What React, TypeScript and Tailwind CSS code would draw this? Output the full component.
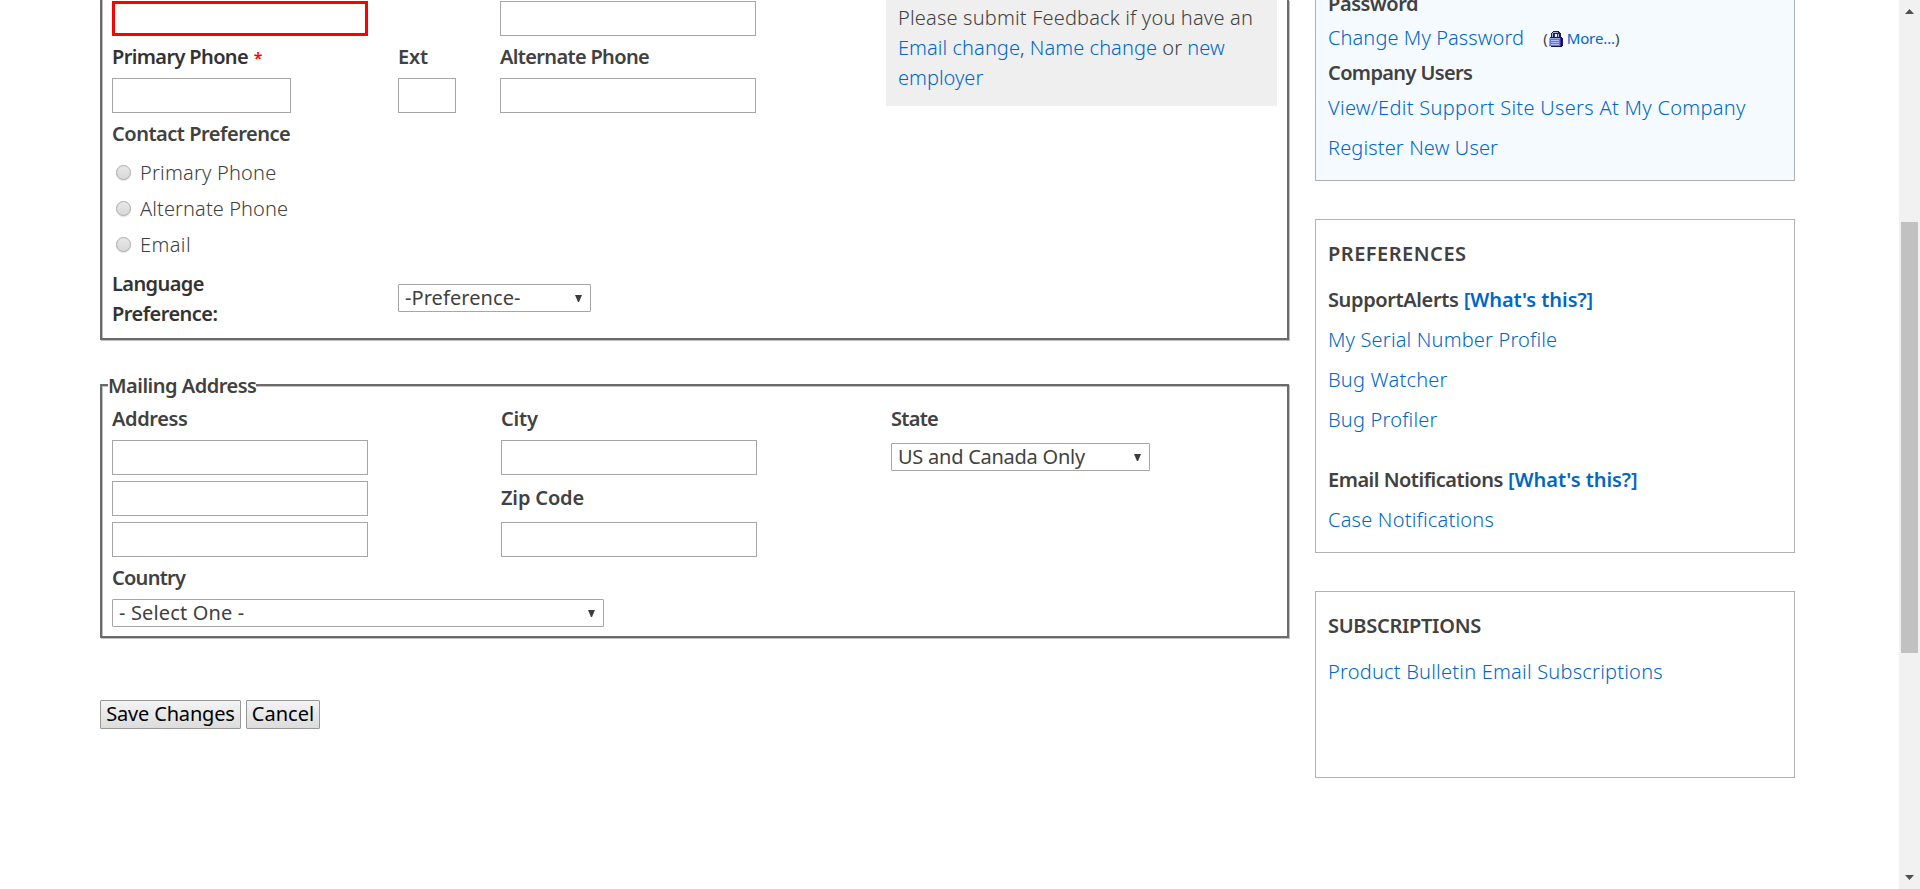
import type { ReactNode } from 'react';

const LINE = 'block h-[30px] whitespace-nowrap leading-[32px]';

function Label({ children, className = '' }: { children: ReactNode; className?: string }) {
  return <label className={`${LINE} font-semibold ${className}`}>{children}</label>;
}

function TextField({ className = 'w-64' }: { className?: string }) {
  return <input type="text" className={`block h-[35px] border border-[#a6a6a6] bg-white ${className}`} />;
}

function Select({ children, className = '' }: { children: ReactNode; className?: string }) {
  return (
    <div className={`flex h-7 items-center justify-between rounded-[1px] border border-[#a6a6a6] bg-white pr-2 pl-1.5 font-normal text-[#414141] ${className}`}>
      <span className="whitespace-nowrap leading-[26px]">{children}</span>
      <svg className="h-[7px] w-[7px]" viewBox="0 0 7 7" fill="#3c3c3c">
        <path d="M0 0h7L4 7H3z" />
      </svg>
    </div>
  );
}

function Radio({ children, className = '' }: { children: ReactNode; className?: string }) {
  return (
    <div className="flex h-9 items-center pl-1">
      <span className="h-[15px] w-[15px] rounded-full border border-[#a9a9a9] bg-linear-to-b from-[#e8e8e8] to-[#d8d8d8] shadow-[0_1px_1px_rgba(0,0,0,0.12)]" />
      <span className={`h-[30px] whitespace-nowrap pl-[9px] leading-[32px] ${className}`}>{children}</span>
    </div>
  );
}

function Link({ children, className = '' }: { children: ReactNode; className?: string }) {
  return <a href="#" className={`text-[#0067c5] ${className}`}>{children}</a>;
}

function Button({ children, className = '' }: { children: ReactNode; className?: string }) {
  return (
    <button className={`h-[29px] whitespace-nowrap rounded-[1px] border border-[#979797] bg-linear-to-b from-[#f4f4f4] to-[#dcdcdc] pb-0.5 text-center font-normal leading-[25px] text-black ${className}`}>
      {children}
    </button>
  );
}

function LockIcon() {
  return (
    <svg className="h-4 w-[15px]" viewBox="0 0 15 16" shapeRendering="crispEdges">
      <path d="M5 0h6v1h1v1h1v5h-3V3H6v4H3V2h1V1h1z" fill="#20203c" />
      <path d="M5 1h5v1H5zM4 2h1v5H4zM10 3h1v4h-1z" fill="#a9b0d8" />
      <path d="M6 3h4v4H6z" fill="#34344e" />
      <path d="M7 3h2v3H7z" fill="#e8ecfa" />
      <path d="M2 6h12v1h1v8h-1v1H3v-1H1V7h1z" fill="#1d1260" />
      <path d="M1 7h11v8H1z" fill="#6a70d8" />
      <path d="M1 7h11v1H1zM1 7h1v7H1z" fill="#9aa4ee" />
      <path d="M3 9h8v1H3zM3 11h8v1H3zM3 13h8v1H3z" fill="#b4c0fa" />
      <path d="M12 7h1v8h-1z" fill="#3b2f9c" />
    </svg>
  );
}

function ContactSection() {
  return (
    <section className="flex h-[340px] w-[1189px] justify-between border-2 border-t-0 border-[#6b6b6b] px-[10px] shadow-[inset_1px_0_0_#c0c0c0,1px_1px_0_#c0c0c0]">
      <div>
        <div className="flex pt-px">
          <input type="text" className="block h-[35px] w-64 border-3 border-[#ff0000] bg-white" />
          <TextField className="ml-[132px] w-64" />
        </div>
        <div className="mt-[5px] flex">
          <div className="w-[286px]">
            <Label className="text-[#333] tracking-[-0.63px]">
              Primary Phone <span className="ml-px text-[16px] text-[#ff0000]">*</span>
            </Label>
            <TextField className="mt-[7px] w-[179px]" />
          </div>
          <div className="w-[102px]">
            <Label className="tracking-[-0.18px]">Ext</Label>
            <TextField className="mt-[7px] w-[58px]" />
          </div>
          <div>
            <Label className="tracking-[-0.66px]">Alternate Phone</Label>
            <TextField className="mt-[7px] w-64" />
          </div>
        </div>
        <Label className="mt-[5px] tracking-[-0.48px]">Contact Preference</Label>
        <div className="mt-[6px]">
          <Radio className="tracking-[0.2px]">Primary Phone</Radio>
          <Radio className="tracking-[0.1px]">Alternate Phone</Radio>
          <Radio className="tracking-[0.4px]">Email</Radio>
        </div>
        <div className="mt-[6px] flex">
          <div className="w-[286px] text-[#333]">
            <Label className="tracking-[-0.6px]">Language</Label>
            <Label className="tracking-[-0.55px]">Preference:</Label>
          </div>
          <Select className="mt-[16px] w-[193px] tracking-[0.07px]">-Preference-</Select>
        </div>
      </div>
      <aside className="h-[106px] w-[391px] bg-[#efefef] pt-[3px] pl-3">
        <p className="whitespace-nowrap leading-[30px]">
          <span className="tracking-[0.18px]">Please submit Feedback if you have an</span>
          <br />
          <span className="tracking-[0.06px]">
            <Link>Email change</Link>, <Link>Name change</Link> or <Link>new</Link>
          </span>
          <br />
          <Link>employer</Link>
        </p>
      </aside>
    </section>
  );
}

function MailingSection() {
  return (
    <section className="mt-[44px] h-[254px] w-[1189px] border-2 border-[#6b6b6b] px-[10px] shadow-[inset_1px_1px_0_#c0c0c0,1px_1px_0_#c0c0c0]">
      <h2 className={`${LINE} -mt-4 -ml-1 w-[148px] bg-white font-semibold tracking-[-0.5px]`}>Mailing Address</h2>
      <div className="mt-[3px] flex">
        <div className="w-[389px]">
          <Label className="tracking-[-0.39px]">Address</Label>
          <div className="mt-[7px] flex flex-col gap-[6px]">
            <TextField />
            <TextField />
            <TextField />
          </div>
        </div>
        <div className="w-[390px]">
          <Label className="tracking-[-0.18px]">City</Label>
          <TextField className="mt-[7px] w-64" />
          <Label className="mt-[7px] tracking-[-0.15px]">Zip Code</Label>
          <TextField className="mt-[10px] w-64" />
        </div>
        <div>
          <Label className="tracking-[-0.73px]">State</Label>
          <Select className="mt-[10px] w-[259px] tracking-[-0.25px]">US and Canada Only</Select>
        </div>
      </div>
      <Label className="mt-[5px] tracking-[-0.74px]">Country</Label>
      <Select className="mt-[7px] w-[492px] tracking-[0.15px]">- Select One -</Select>
    </section>
  );
}

function Sidebar() {
  return (
    <div className="ml-[26px] w-[480px]">
      <section className="flow-root h-[181px] border border-t-0 border-[#b2b2b2] bg-[#f5faff] pl-3">
        <h3 className={`${LINE} -mt-3 font-semibold tracking-[-0.42px]`}>Password</h3>
        <div className="mt-1 flex h-[30px] items-center whitespace-nowrap">
          <Link className={`${LINE} tracking-[0.09px]`}>Change My Password</Link>
          <span className="ml-[19px] flex items-center text-[15px] font-normal leading-[30px]">
            <span className="pt-0.5">(</span>
            <span className="pt-1"><LockIcon /></span>
            <Link className="ml-1 pt-0.5 tracking-[-0.1px]">More...</Link>
            <span className="pt-0.5">)</span>
          </span>
        </div>
        <h3 className={`${LINE} mt-[5px] font-semibold tracking-[-0.63px]`}>Company Users</h3>
        <Link className={`${LINE} mt-[5px] tracking-[0.3px]`}>View/Edit Support Site Users At My Company</Link>
        <Link className={`${LINE} mt-[10px] tracking-[0.13px]`}>Register New User</Link>
      </section>

      <section className="mt-[38px] h-[334px] border border-[#b2b2b2] pt-[18px] pl-3">
        <h2 className={`${LINE} font-semibold tracking-[0.5px]`}>PREFERENCES</h2>
        <h3 className={`${LINE} mt-4 font-semibold`}>
          <span className="tracking-[-0.38px]">SupportAlerts</span> <Link className="tracking-[-0.06px]">[What's this?]</Link>
        </h3>
        <Link className={`${LINE} mt-[10px] tracking-[0.17px]`}>My Serial Number Profile</Link>
        <Link className={`${LINE} mt-[10px] tracking-[0.22px]`}>Bug Watcher</Link>
        <Link className={`${LINE} mt-[10px] tracking-[0.2px]`}>Bug Profiler</Link>
        <h3 className={`${LINE} mt-[30px] font-semibold`}>
          <span className="tracking-[-0.49px]">Email Notifications</span> <Link className="tracking-[-0.06px]">[What's this?]</Link>
        </h3>
        <Link className={`${LINE} mt-[10px] tracking-[0.21px]`}>Case Notifications</Link>
      </section>

      <section className="mt-[38px] h-[187px] border border-[#b2b2b2] pt-[18px] pl-3">
        <h2 className={`${LINE} font-semibold tracking-[-0.3px]`}>SUBSCRIPTIONS</h2>
        <Link className={`${LINE} mt-4 tracking-[0.22px]`}>Product Bulletin Email Subscriptions</Link>
      </section>
    </div>
  );
}

function Scrollbar() {
  return (
    <div className="ml-auto flex h-[889px] w-[21px] flex-col items-center bg-[#f1f1f1]">
      <svg className="mt-[9px] h-[5px] w-[9px]" viewBox="0 0 9 5" fill="#505050">
        <path d="M4.5 0L9 5H0z" />
      </svg>
      <div className="mt-[208px] h-[431px] w-[17px] bg-[#c1c1c1]" />
      <svg className="mt-auto mb-[9px] h-[5px] w-[9px]" viewBox="0 0 9 5" fill="#505050">
        <path d="M4.5 5L9 0H0z" />
      </svg>
    </div>
  );
}

export default function App() {
  return (
    <div className="flex h-[889px] w-[1920px] overflow-hidden bg-white pl-[100px] font-['Noto_Sans',sans-serif] text-[20px] font-light text-[#414141]">
      <div className="w-[1189px]">
        <ContactSection />
        <MailingSection />
        <div className="mt-[62px] flex gap-[5px]">
          <Button className="w-[141px] tracking-[-0.18px]">Save Changes</Button>
          <Button className="w-[74px]">Cancel</Button>
        </div>
      </div>
      <Sidebar />
      <Scrollbar />
    </div>
  );
}
